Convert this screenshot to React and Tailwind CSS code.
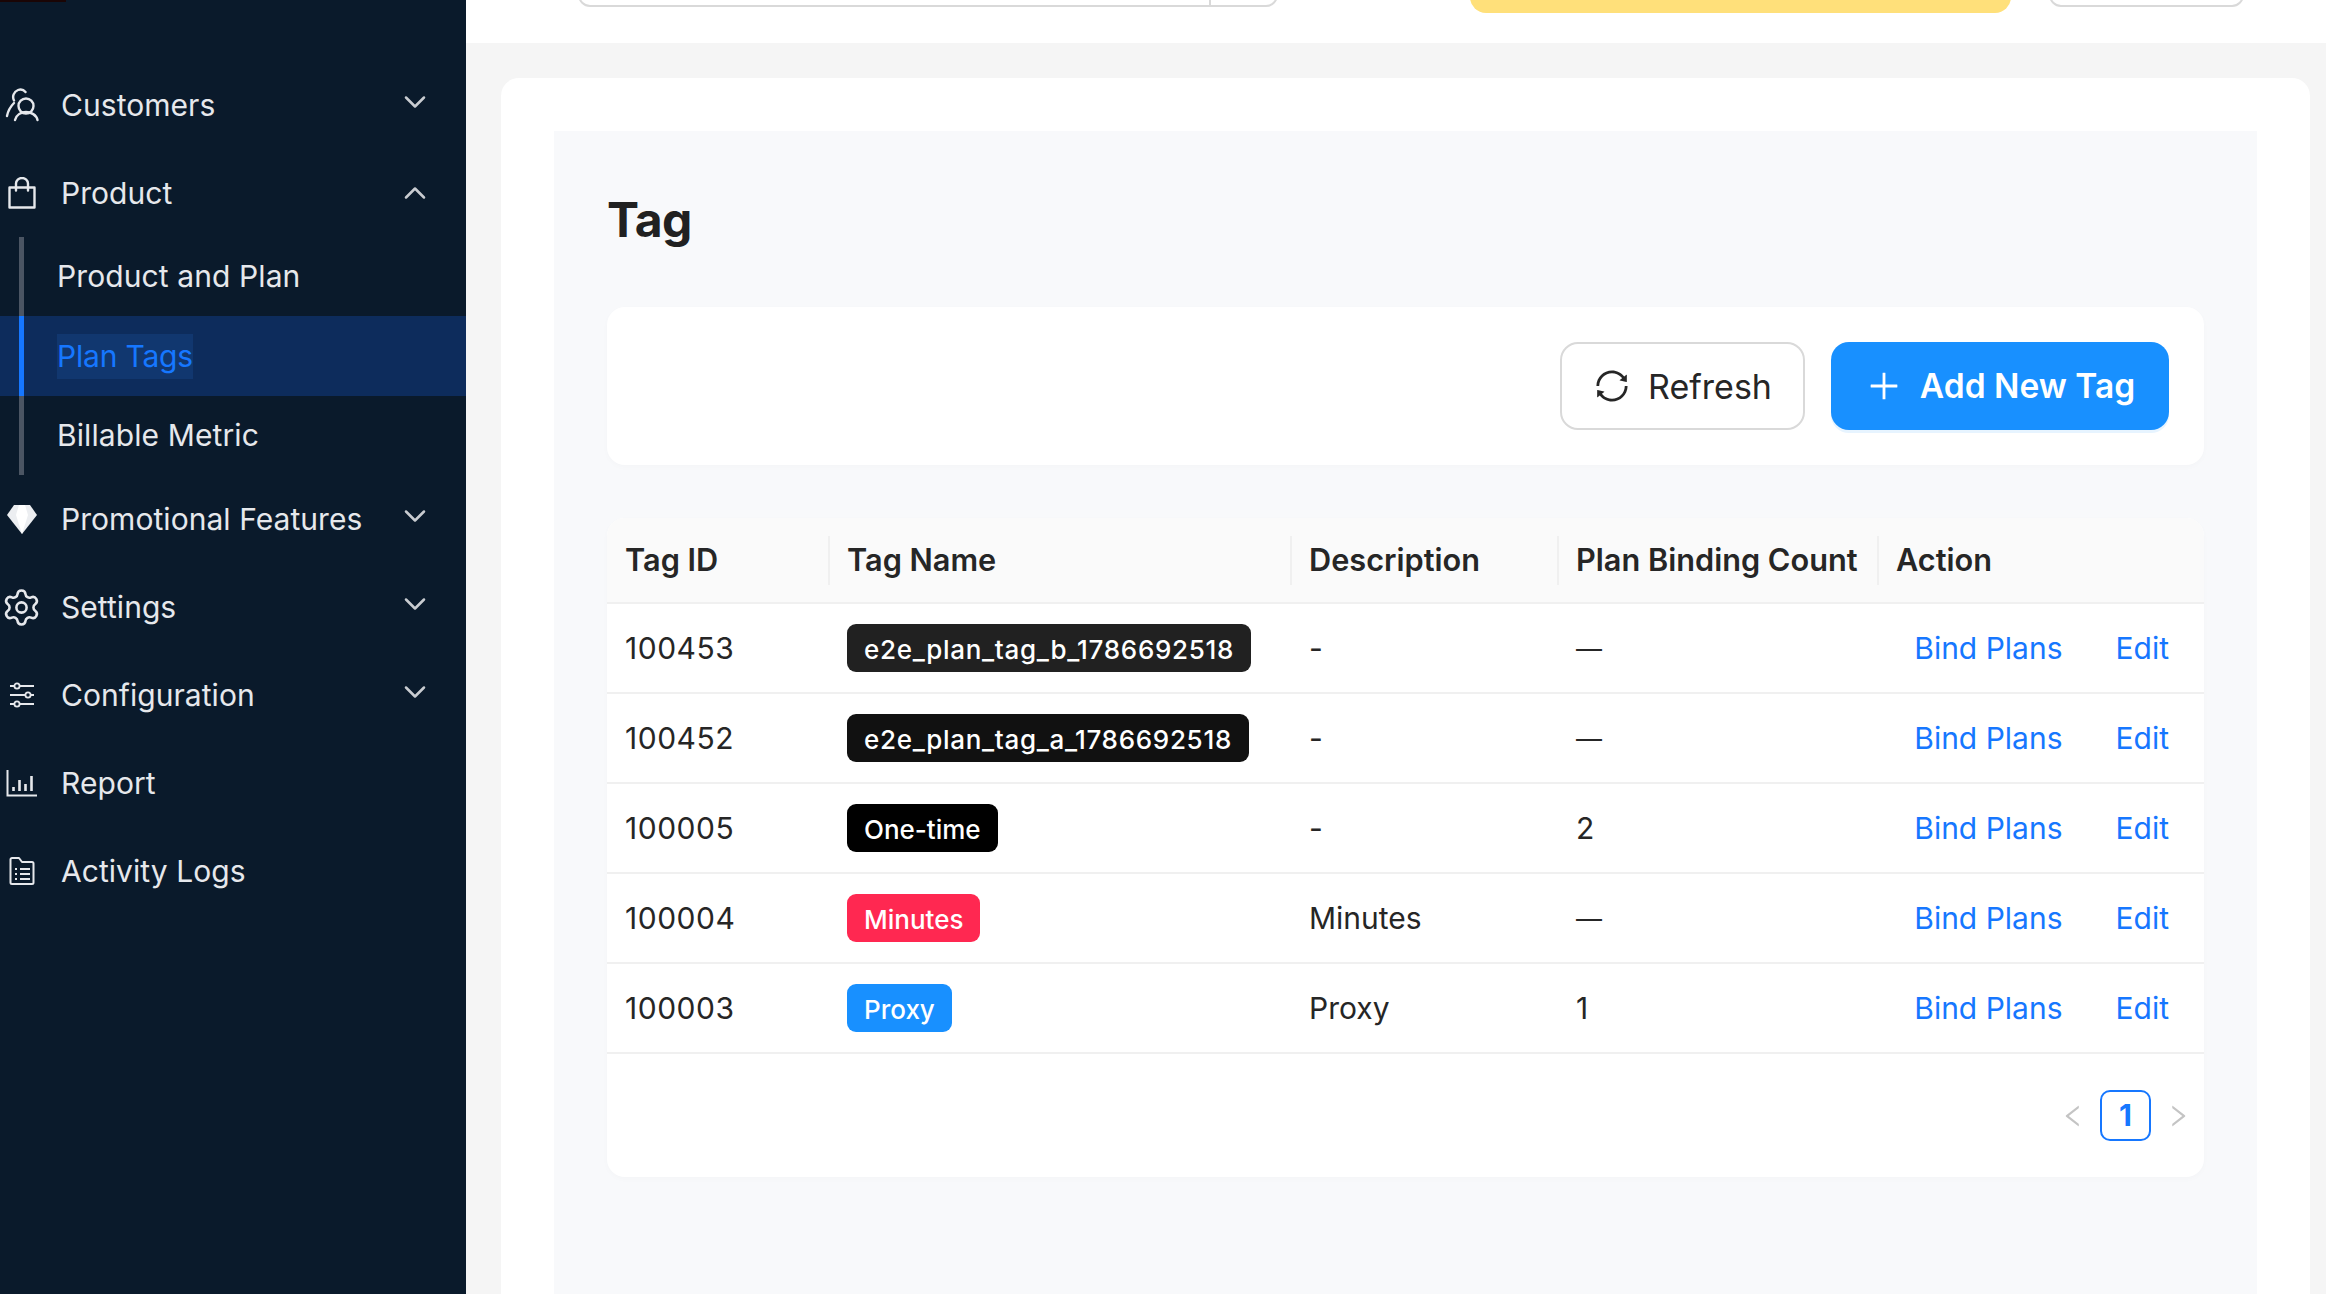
import React from "react";
import { ChevronDown, ChevronUp, Settings } from "lucide-react";
import { AiOutlineSync, AiOutlinePlus, AiOutlineLeft, AiOutlineRight } from "react-icons/ai";

const CustomersIcon = () => (
  <svg width="34" height="34" viewBox="0 0 34 34" fill="none" stroke="currentColor" strokeWidth="2.4" strokeLinecap="round">
    <circle cx="21" cy="18" r="7.5" />
    <path d="M10 32c1-5 6-8 11-8s10.5 3 11.5 8" />
    <path d="M9 12.5a7.5 7.5 0 0 1 4-10.5 6.5 6.5 0 0 1 7.5 2" />
    <path d="M2 28c1-5 3-9 7-13" />
  </svg>
);

const BagIcon = () => (
  <svg width="30" height="32" viewBox="0 0 30 32" fill="none" stroke="currentColor" strokeWidth="2.4">
    <path d="M2.5 10.5h25v20h-25z" strokeLinejoin="round" />
    <path d="M9 13.5v-7a6 5.5 0 0 1 12 0v7" strokeLinecap="round" />
  </svg>
);

const DiamondIcon = () => (
  <svg width="30" height="30" viewBox="0 0 30 30">
    <path d="M7 1h16l7 10-15 19L0 11z" fill="#eceef1" />
    <path d="M12 1h6l3 10-6 19-6-19z" fill="#ffffff" />
  </svg>
);

const SlidersIcon = () => (
  <svg width="26" height="26" viewBox="0 0 26 26" fill="none" stroke="currentColor" strokeWidth="1.8">
    <path d="M1 4h4M11 4h14M1 13h15M22 13h3M1 22h4M11 22h14" />
    <circle cx="8" cy="4" r="2.6" />
    <circle cx="19" cy="13" r="2.6" />
    <circle cx="8" cy="22" r="2.6" />
  </svg>
);

const ReportIcon = () => (
  <svg width="32" height="27" viewBox="0 0 32 27" fill="none" stroke="currentColor" strokeWidth="2">
    <path d="M1.5 0v25.5H31" />
    <path d="M7.5 21v-4M13.5 21V10M19.5 21v-7M25.5 21V6" strokeWidth="2.6" />
  </svg>
);

const LogsIcon = () => (
  <svg width="26" height="29" viewBox="0 0 26 29" fill="none" stroke="currentColor" strokeWidth="2">
    <path d="M1.5 2.5a1.5 1.5 0 0 1 1.5-1.5h7l3 4h10a1.5 1.5 0 0 1 1.5 1.5v19a1.5 1.5 0 0 1-1.5 1.5H3a1.5 1.5 0 0 1-1.5-1.5z" strokeLinejoin="round" />
    <path d="M6 12h2M11 12h10M6 17h2M11 17h10M6 22h2M11 22h10" />
  </svg>
);

const menuRows = [
  { label: "Promotional Features", icon: <DiamondIcon />, arrow: true },
  { label: "Settings", icon: <Settings size={41} strokeWidth={1.5} />, arrow: true },
  { label: "Configuration", icon: <SlidersIcon />, arrow: true },
  { label: "Report", icon: <ReportIcon />, arrow: false },
  { label: "Activity Logs", icon: <LogsIcon />, arrow: false },
];

const tagRows = [
  { id: "100453", name: "e2e_plan_tag_b_1786692518", color: "bg-[#212121] tracking-[0.7px]", desc: "-", count: "—" },
  { id: "100452", name: "e2e_plan_tag_a_1786692518", color: "bg-[#111111] tracking-[0.7px]", desc: "-", count: "—" },
  { id: "100005", name: "One-time", color: "bg-[#000000]", desc: "-", count: "2" },
  { id: "100004", name: "Minutes", color: "bg-[#ff2851]", desc: "Minutes", count: "—" },
  { id: "100003", name: "Proxy", color: "bg-[#1890ff]", desc: "Proxy", count: "1" },
];

const gridCols = "grid grid-cols-[221px_462px_267px_320px_1fr]";

const MenuRow = ({ label, icon, arrow, up }) => (
  <div className="flex h-[88px] items-center text-[#e6e8ec]">
    <div className="flex w-[61px] shrink-0 items-center justify-center pr-[18px]">{icon}</div>
    <span className="text-[30px] tracking-[0.05px]">{label}</span>
    {arrow && (
      <div className={`ml-auto mr-[33px] text-[#c9ccd1] ${up ? "" : "mb-[7px]"}`}>
        {up ? <ChevronUp size={36} strokeWidth={1.7} /> : <ChevronDown size={36} strokeWidth={1.7} />}
      </div>
    )}
  </div>
);

const SubRow = ({ label, active }) => (
  <div className={`h-[79.4px] pl-[19px] ${active ? "bg-[#0d2c5c]" : ""}`}>
    <div className={`flex h-full items-center border-l-[5px] pl-[33px] text-[30px] ${active ? "border-[#1677ff] tracking-[-0.2px] text-[#1677ff]" : "border-[#4b5563] tracking-[0.1px] text-[#e6e8ec]"}`}>
      <span className={active ? "bg-[#11376f]" : ""}>{label}</span>
    </div>
  </div>
);

const HeadCell = ({ children, first }) => (
  <div className="flex items-center">
    {!first && <div className="h-[49px] w-[2px] bg-[#f0f0f0]" />}
    <span className={first ? "pl-[18px]" : "pl-[17px]"}>{children}</span>
  </div>
);

const Sidebar = () => (
  <aside className="h-full w-[466px] shrink-0 bg-[#0a1a2b]">
    <div className="h-[2px] w-[66px] bg-[#1a0505]" />
    <div className="pt-[59px]">
      <MenuRow label="Customers" icon={<CustomersIcon />} arrow />
      <MenuRow label="Product" icon={<BagIcon />} arrow up />
      <SubRow label="Product and Plan" />
      <SubRow label="Plan Tags" active />
      <SubRow label="Billable Metric" />
      {menuRows.map((row) => (
        <MenuRow key={row.label} {...row} />
      ))}
    </div>
  </aside>
);

const TopBar = () => (
  <div className="flex h-[43px] shrink-0 items-end overflow-hidden bg-white">
    <div className="mb-[36px] ml-[112px] flex h-[40px] w-[700px] justify-end rounded-b-[12px] border-2 border-[#d9d9d9]">
      <div className="w-[67px] border-l-2 border-[#d9d9d9]" />
    </div>
    <div className="mb-[30px] ml-[192px] h-[40px] w-[541px] rounded-b-[16px] bg-[#ffe07a]" />
    <div className="mb-[36px] ml-[38px] h-[40px] w-[195px] rounded-b-[12px] border-2 border-[#d9d9d9]" />
  </div>
);

const App = () => {
  return (
    <div className="flex h-[1294px] w-[2326px] overflow-hidden bg-[#f5f5f5] font-['Inter',sans-serif] text-[#262626]">
      <Sidebar />
      <main className="flex min-w-0 flex-1 flex-col">
        <TopBar />
        <div className="ml-[35px] mr-[16px] mt-[35px] flex-1 rounded-t-[18px] bg-white px-[53px] pt-[53px]">
          <div className="h-full bg-[#f8f9fb] px-[53px]">
            <h1 className="flex h-[176px] items-center pt-[1px] text-[48px] font-bold tracking-[-0.7px] text-[#212121]">Tag</h1>

            <div className="flex h-[158px] items-center justify-end gap-[26px] rounded-[18px] bg-white px-[35px] shadow-[0_2px_6px_rgba(0,0,0,0.02)]">
              <button className="flex h-[88px] w-[245px] items-center justify-center gap-[17px] rounded-[18px] border-2 border-[#d9d9d9] bg-white text-[34px]">
                <AiOutlineSync size={38} />
                Refresh
              </button>
              <button className="flex h-[88px] w-[338px] items-center justify-center gap-[17px] rounded-[18px] bg-[#1890ff] text-[33.5px] font-semibold text-white shadow-[0_3px_0_rgba(24,144,255,0.1)]">
                <AiOutlinePlus size={38} />
                Add New Tag
              </button>
            </div>

            <div className="mt-[53px] h-[659px] rounded-[18px] bg-white shadow-[0_2px_6px_rgba(0,0,0,0.02)]">
              <div className={`${gridCols} h-[86px] rounded-t-[18px] border-b-2 border-[#f0f0f0] bg-[#fafafa] pt-[1px] text-[30.7px] font-semibold`}>
                <HeadCell first>Tag ID</HeadCell>
                <HeadCell>Tag Name</HeadCell>
                <HeadCell>Description</HeadCell>
                <HeadCell>Plan Binding Count</HeadCell>
                <HeadCell>Action</HeadCell>
              </div>

              {tagRows.map((row) => (
                <div key={row.id} className={`${gridCols} h-[90px] items-center border-b-2 border-[#f0f0f0] text-[30px]`}>
                  <div className="pl-[18px] tracking-[0.5px]">{row.id}</div>
                  <div className="pl-[19px]">
                    <span className={`inline-flex h-[48px] items-center rounded-[9px] px-[17px] pt-[2px] text-[26px] font-medium text-white ${row.color}`}>
                      {row.name}
                    </span>
                  </div>
                  <div className="pl-[19px]">{row.desc}</div>
                  <div className={`pl-[19px] ${row.count === "—" ? "text-[26px]" : ""}`}>{row.count}</div>
                  <div className="flex justify-end gap-[53px] pr-[35px] text-[#1677ff]">
                    <a>Bind Plans</a>
                    <a>Edit</a>
                  </div>
                </div>
              ))}

              <div className="flex items-center justify-end gap-[13px] pr-[12px] pt-[36px]">
                <AiOutlineLeft size={28} className="text-[#c4c4c4]" />
                <div className="flex h-[51px] w-[51px] items-center justify-center rounded-[10px] border-2 border-[#1677ff] text-[30px] font-bold text-[#1677ff]">1</div>
                <AiOutlineRight size={28} className="text-[#c4c4c4]" />
              </div>
            </div>
          </div>
        </div>
      </main>
    </div>
  );
};

export default App;
